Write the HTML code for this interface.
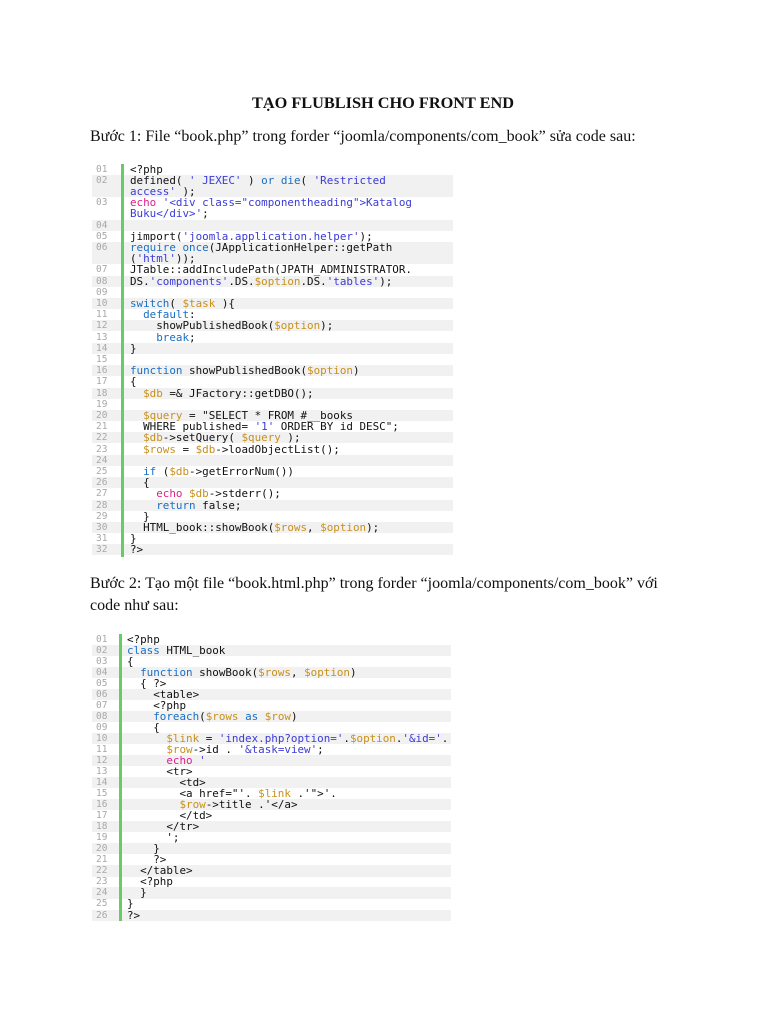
<!DOCTYPE html>
<html><head><meta charset="utf-8">
<style>
body{margin:0;background:#fff;width:768px;height:1024px;position:relative;overflow:hidden;font-family:"Liberation Serif",serif;color:#111}
.t{position:absolute;font-size:16px;white-space:nowrap}
.blk{position:absolute}
.r{position:absolute;left:0;height:11.2px;line-height:11.6px;font-family:"DejaVu Sans Mono",monospace;font-size:10.9px;white-space:pre;color:#111}
.r.sh{background:#f1f1f1}
.n{position:absolute;left:4px;color:#a8a8a8;font-size:9.5px}
.c{position:absolute}
.bar{position:absolute;width:3px;background:#66cc66;z-index:5}
.k{color:#1a6fc4}.s{color:#3a3ad8}.v{color:#c8901a}.e{color:#e0208a}
</style></head><body>
<div class="t" style="left:252px;top:93px;font-weight:bold;font-size:16.3px">TẠO FLUBLISH CHO FRONT END</div>
<div class="t" style="left:90px;top:128px">Bước 1: File “book.php” trong forder “joomla/components/com_book” sửa code sau:</div>

<div class="blk" style="left:92px;top:163.5px;width:361px;height:393px">
<div class="bar" style="left:29px;top:0;height:393px"></div>
<div class="r" style="top:0px;width:361px"><span class="n">01</span><span class="c" style="left:38px">&lt;?php</span></div>
<div class="r sh" style="top:11.2px;width:361px"><span class="n">02</span><span class="c" style="left:38px">defined( <span class="s">'_JEXEC'</span> ) <span class="k">or die</span>( <span class="s">'Restricted</span></span></div>
<div class="r sh" style="top:22.4px;width:361px"><span class="c" style="left:38px"><span class="s">access'</span> );</span></div>
<div class="r" style="top:33.6px;width:361px"><span class="n">03</span><span class="c" style="left:38px"><span class="e">echo</span> <span class="s">'&lt;div class="componentheading"&gt;Katalog</span></span></div>
<div class="r" style="top:44.8px;width:361px"><span class="c" style="left:38px"><span class="s">Buku&lt;/div&gt;'</span>;</span></div>
<div class="r sh" style="top:56px;width:361px"><span class="n">04</span></div>
<div class="r" style="top:67.2px;width:361px"><span class="n">05</span><span class="c" style="left:38px">jimport(<span class="s">'joomla.application.helper'</span>);</span></div>
<div class="r sh" style="top:78.4px;width:361px"><span class="n">06</span><span class="c" style="left:38px"><span class="k">require_once</span>(JApplicationHelper::getPath</span></div>
<div class="r sh" style="top:89.6px;width:361px"><span class="c" style="left:38px">(<span class="s">'html'</span>));</span></div>
<div class="r" style="top:100.8px;width:361px"><span class="n">07</span><span class="c" style="left:38px">JTable::addIncludePath(JPATH_ADMINISTRATOR.</span></div>
<div class="r sh" style="top:112px;width:361px"><span class="n">08</span><span class="c" style="left:38px">DS.<span class="s">'components'</span>.DS.<span class="v">$option</span>.DS.<span class="s">'tables'</span>);</span></div>
<div class="r" style="top:123.2px;width:361px"><span class="n">09</span></div>
<div class="r sh" style="top:134.4px;width:361px"><span class="n">10</span><span class="c" style="left:38px"><span class="k">switch</span>( <span class="v">$task</span> ){</span></div>
<div class="r" style="top:145.6px;width:361px"><span class="n">11</span><span class="c" style="left:38px">  <span class="k">default</span>:</span></div>
<div class="r sh" style="top:156.8px;width:361px"><span class="n">12</span><span class="c" style="left:38px">    showPublishedBook(<span class="v">$option</span>);</span></div>
<div class="r" style="top:168px;width:361px"><span class="n">13</span><span class="c" style="left:38px">    <span class="k">break</span>;</span></div>
<div class="r sh" style="top:179.2px;width:361px"><span class="n">14</span><span class="c" style="left:38px">}</span></div>
<div class="r" style="top:190.4px;width:361px"><span class="n">15</span></div>
<div class="r sh" style="top:201.6px;width:361px"><span class="n">16</span><span class="c" style="left:38px"><span class="k">function</span> showPublishedBook(<span class="v">$option</span>)</span></div>
<div class="r" style="top:212.8px;width:361px"><span class="n">17</span><span class="c" style="left:38px">{</span></div>
<div class="r sh" style="top:224px;width:361px"><span class="n">18</span><span class="c" style="left:38px">  <span class="v">$db</span> =&amp; JFactory::getDBO();</span></div>
<div class="r" style="top:235.2px;width:361px"><span class="n">19</span></div>
<div class="r sh" style="top:246.4px;width:361px"><span class="n">20</span><span class="c" style="left:38px">  <span class="v">$query</span> = "SELECT * FROM #__books</span></div>
<div class="r" style="top:257.6px;width:361px"><span class="n">21</span><span class="c" style="left:38px">  WHERE published= <span class="s">'1'</span> ORDER BY id DESC";</span></div>
<div class="r sh" style="top:268.8px;width:361px"><span class="n">22</span><span class="c" style="left:38px">  <span class="v">$db</span>-&gt;setQuery( <span class="v">$query</span> );</span></div>
<div class="r" style="top:280px;width:361px"><span class="n">23</span><span class="c" style="left:38px">  <span class="v">$rows</span> = <span class="v">$db</span>-&gt;loadObjectList();</span></div>
<div class="r sh" style="top:291.2px;width:361px"><span class="n">24</span></div>
<div class="r" style="top:302.4px;width:361px"><span class="n">25</span><span class="c" style="left:38px">  <span class="k">if</span> (<span class="v">$db</span>-&gt;getErrorNum())</span></div>
<div class="r sh" style="top:313.6px;width:361px"><span class="n">26</span><span class="c" style="left:38px">  {</span></div>
<div class="r" style="top:324.8px;width:361px"><span class="n">27</span><span class="c" style="left:38px">    <span class="e">echo</span> <span class="v">$db</span>-&gt;stderr();</span></div>
<div class="r sh" style="top:336px;width:361px"><span class="n">28</span><span class="c" style="left:38px">    <span class="k">return</span> false;</span></div>
<div class="r" style="top:347.2px;width:361px"><span class="n">29</span><span class="c" style="left:38px">  }</span></div>
<div class="r sh" style="top:358.4px;width:361px"><span class="n">30</span><span class="c" style="left:38px">  HTML_book::showBook(<span class="v">$rows</span>, <span class="v">$option</span>);</span></div>
<div class="r" style="top:369.6px;width:361px"><span class="n">31</span><span class="c" style="left:38px">}</span></div>
<div class="r sh" style="top:380.8px;width:361px"><span class="n">32</span><span class="c" style="left:38px">?&gt;</span></div>
</div>

<div class="t" style="left:90px;top:575px">Bước 2: Tạo một file “book.html.php” trong forder “joomla/components/com_book” với</div>
<div class="t" style="left:90px;top:597px">code như sau:</div>

<div class="blk" style="left:92px;top:633.5px;width:359px;height:287px">
<div class="bar" style="left:27px;top:0;height:287px"></div>
<div class="r" style="top:0px;width:359px;height:11.04px"><span class="n">01</span><span class="c" style="left:35px">&lt;?php</span></div>
<div class="r sh" style="top:11.04px;width:359px"><span class="n">02</span><span class="c" style="left:35px"><span class="k">class</span> HTML_book</span></div>
<div class="r" style="top:22.08px;width:359px"><span class="n">03</span><span class="c" style="left:35px">{</span></div>
<div class="r sh" style="top:33.12px;width:359px"><span class="n">04</span><span class="c" style="left:35px">  <span class="k">function</span> showBook(<span class="v">$rows</span>, <span class="v">$option</span>)</span></div>
<div class="r" style="top:44.16px;width:359px"><span class="n">05</span><span class="c" style="left:35px">  { ?&gt;</span></div>
<div class="r sh" style="top:55.2px;width:359px"><span class="n">06</span><span class="c" style="left:35px">    &lt;table&gt;</span></div>
<div class="r" style="top:66.24px;width:359px"><span class="n">07</span><span class="c" style="left:35px">    &lt;?php</span></div>
<div class="r sh" style="top:77.28px;width:359px"><span class="n">08</span><span class="c" style="left:35px">    <span class="k">foreach</span>(<span class="v">$rows</span> <span class="k">as</span> <span class="v">$row</span>)</span></div>
<div class="r" style="top:88.32px;width:359px"><span class="n">09</span><span class="c" style="left:35px">    {</span></div>
<div class="r sh" style="top:99.36px;width:359px"><span class="n">10</span><span class="c" style="left:35px">      <span class="v">$link</span> = <span class="s">'index.php?option='</span>.<span class="v">$option</span>.<span class="s">'&amp;id='</span>.</span></div>
<div class="r" style="top:110.4px;width:359px"><span class="n">11</span><span class="c" style="left:35px">      <span class="v">$row</span>-&gt;id . <span class="s">'&amp;task=view'</span>;</span></div>
<div class="r sh" style="top:121.44px;width:359px"><span class="n">12</span><span class="c" style="left:35px">      <span class="e">echo</span> <span class="s">'</span></span></div>
<div class="r" style="top:132.48px;width:359px"><span class="n">13</span><span class="c" style="left:35px">      &lt;tr&gt;</span></div>
<div class="r sh" style="top:143.52px;width:359px"><span class="n">14</span><span class="c" style="left:35px">        &lt;td&gt;</span></div>
<div class="r" style="top:154.56px;width:359px"><span class="n">15</span><span class="c" style="left:35px">        &lt;a href="'. <span class="v">$link</span> .'"&gt;'.</span></div>
<div class="r sh" style="top:165.6px;width:359px"><span class="n">16</span><span class="c" style="left:35px">        <span class="v">$row</span>-&gt;title .'&lt;/a&gt;</span></div>
<div class="r" style="top:176.64px;width:359px"><span class="n">17</span><span class="c" style="left:35px">        &lt;/td&gt;</span></div>
<div class="r sh" style="top:187.68px;width:359px"><span class="n">18</span><span class="c" style="left:35px">      &lt;/tr&gt;</span></div>
<div class="r" style="top:198.72px;width:359px"><span class="n">19</span><span class="c" style="left:35px">      ';</span></div>
<div class="r sh" style="top:209.76px;width:359px"><span class="n">20</span><span class="c" style="left:35px">    }</span></div>
<div class="r" style="top:220.8px;width:359px"><span class="n">21</span><span class="c" style="left:35px">    ?&gt;</span></div>
<div class="r sh" style="top:231.84px;width:359px"><span class="n">22</span><span class="c" style="left:35px">  &lt;/table&gt;</span></div>
<div class="r" style="top:242.88px;width:359px"><span class="n">23</span><span class="c" style="left:35px">  &lt;?php</span></div>
<div class="r sh" style="top:253.92px;width:359px"><span class="n">24</span><span class="c" style="left:35px">  }</span></div>
<div class="r" style="top:264.96px;width:359px"><span class="n">25</span><span class="c" style="left:35px">}</span></div>
<div class="r sh" style="top:276px;width:359px"><span class="n">26</span><span class="c" style="left:35px">?&gt;</span></div>
</div>
</body></html>
